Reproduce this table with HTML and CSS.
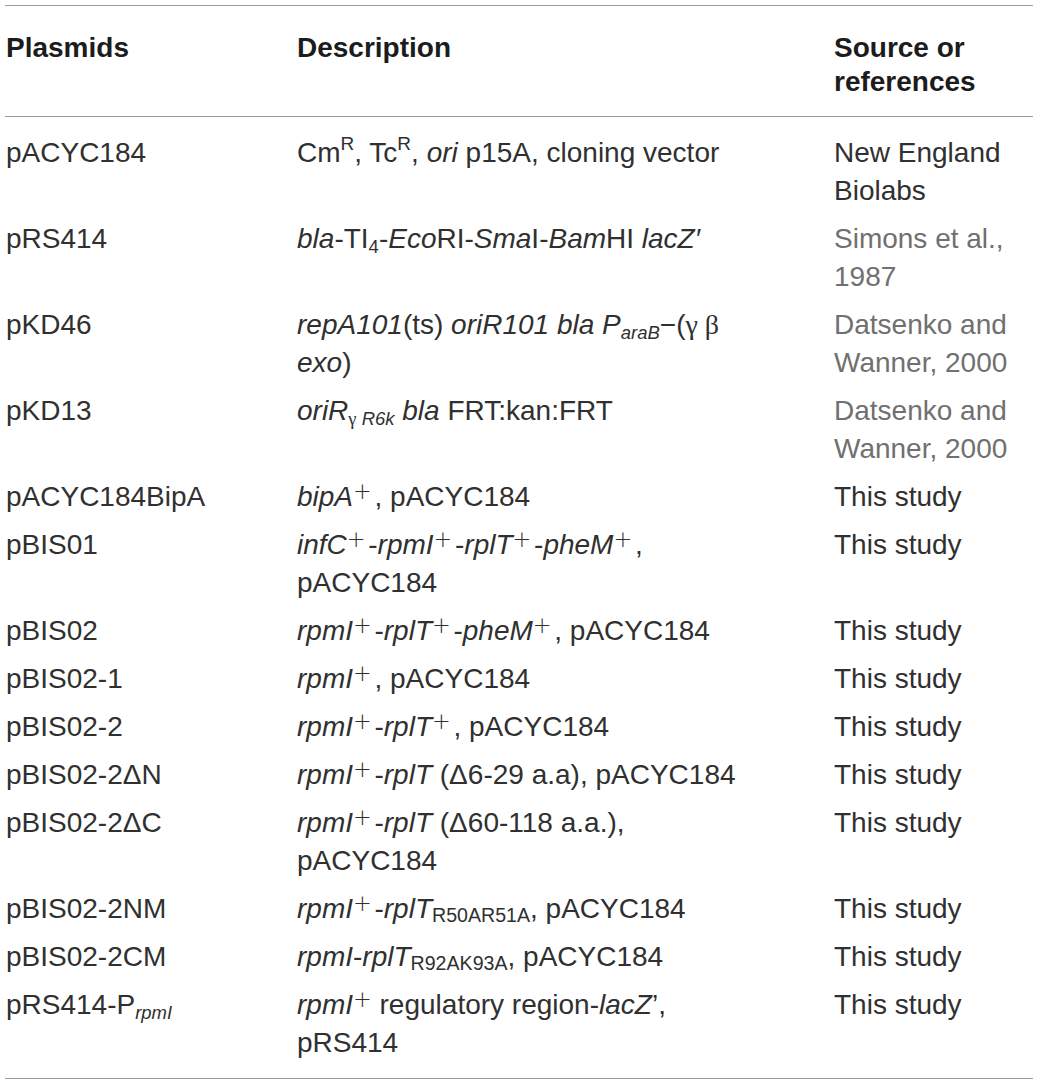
FILE: index.html
```html
<!DOCTYPE html>
<html lang="en">
<head>
<meta charset="utf-8">
<title>Plasmids</title>
<link rel="stylesheet" href="styles.css">
</head>
<body>
<table class="plasmids">
  <colgroup>
    <col class="col-name">
    <col class="col-desc">
    <col class="col-src">
  </colgroup>
  <thead>
    <tr>
      <th>Plasmids</th>
      <th>Description</th>
      <th>Source or references</th>
    </tr>
  </thead>
  <tbody>
    <tr>
      <td>pACYC184</td>
      <td>Cm<sup class="letter">R</sup>, Tc<sup class="letter">R</sup>, <i>ori</i> p15A, cloning vector</td>
      <td>New England Biolabs</td>
    </tr>
    <tr>
      <td>pRS414</td>
      <td><i>bla</i>-TI<sub>4</sub>-<i>Eco</i>RI-<i>Sma</i>I-<i>Bam</i>HI <i>lacZ′</i></td>
      <td class="ref">Simons et al., 1987</td>
    </tr>
    <tr>
      <td>pKD46</td>
      <td><i>repA101</i>(ts) <i>oriR101 bla P<sub>araB</sub></i><span class="dash">−</span>(<span class="greek">γ β</span><br><i>exo</i>)</td>
      <td class="ref">Datsenko and Wanner, 2000</td>
    </tr>
    <tr>
      <td>pKD13</td>
      <td><i>oriR</i><sub><span class="greek">γ</span> <i>R6k</i></sub> <i>bla</i> FRT:kan:FRT</td>
      <td class="ref">Datsenko and Wanner, 2000</td>
    </tr>
    <tr>
      <td>pACYC184BipA</td>
      <td><i>bipA</i><sup class="plus">+</sup>, pACYC184</td>
      <td>This study</td>
    </tr>
    <tr>
      <td>pBIS01</td>
      <td><i>infC</i><sup class="plus">+</sup>-<i>rpmI</i><sup class="plus">+</sup>-<i>rplT</i><sup class="plus">+</sup>-<i>pheM</i><sup class="plus">+</sup>,<br>pACYC184</td>
      <td>This study</td>
    </tr>
    <tr>
      <td>pBIS02</td>
      <td><i>rpmI</i><sup class="plus">+</sup>-<i>rplT</i><sup class="plus">+</sup>-<i>pheM</i><sup class="plus">+</sup>, pACYC184</td>
      <td>This study</td>
    </tr>
    <tr>
      <td>pBIS02-1</td>
      <td><i>rpmI</i><sup class="plus">+</sup>, pACYC184</td>
      <td>This study</td>
    </tr>
    <tr>
      <td>pBIS02-2</td>
      <td><i>rpmI</i><sup class="plus">+</sup>-<i>rplT</i><sup class="plus">+</sup>, pACYC184</td>
      <td>This study</td>
    </tr>
    <tr>
      <td>pBIS02-2ΔN</td>
      <td><i>rpmI</i><sup class="plus">+</sup>-<i>rplT</i> (Δ6-29 a.a), pACYC184</td>
      <td>This study</td>
    </tr>
    <tr>
      <td>pBIS02-2ΔC</td>
      <td><i>rpmI</i><sup class="plus">+</sup>-<i>rplT</i> (Δ60-118 a.a.),<br>pACYC184</td>
      <td>This study</td>
    </tr>
    <tr>
      <td>pBIS02-2NM</td>
      <td><i>rpmI</i><sup class="plus">+</sup>-<i>rplT</i><sub class="mut">R50AR51A</sub>, pACYC184</td>
      <td>This study</td>
    </tr>
    <tr>
      <td>pBIS02-2CM</td>
      <td><i>rpmI</i>-<i>rplT</i><sub class="mut">R92AK93A</sub>, pACYC184</td>
      <td>This study</td>
    </tr>
    <tr>
      <td>pRS414-P<sub><i>rpmI</i></sub></td>
      <td><i>rpmI</i><sup class="plus last">+</sup> regulatory region-<i>lacZ</i>’,<br>pRS414</td>
      <td>This study</td>
    </tr>
  </tbody>
</table>
</body>
</html>
```

FILE: styles.css
```css
html, body {
  margin: 0;
  padding: 0;
  background: #ffffff;
}

body {
  font-family: "Liberation Sans", Arial, Helvetica, sans-serif;
  color: #303030;
}

.plasmids {
  border-collapse: collapse;
  table-layout: fixed;
  width: 1028px;
  margin: 5px 0 0 5px;
  border-top: 1px solid #9c9c9c;
  border-bottom: 1px solid #9c9c9c;
}

.col-name { width: 291px; }
.col-desc { width: 537px; }
.col-src  { width: 200px; }

.plasmids th {
  font-size: 28px;
  font-weight: bold;
  line-height: 34px;
  text-align: left;
  vertical-align: top;
  color: #1c1c1c;
  padding: 25px 0 17px 1px;
  border-bottom: 1px solid #9c9c9c;
}

.plasmids td {
  font-size: 28px;
  line-height: 38px;
  vertical-align: top;
  padding: 5px 0 5px 1px;
}

.plasmids tbody tr:first-child td {
  padding-top: 17px;
}

.plasmids tbody tr:last-child td {
  padding-bottom: 16px;
}

.ref {
  color: #707070;
}

.dash {
  font-weight: normal;
}

sup, sub {
  line-height: 0;
  font-size: 0.72em;
}

sup {
  vertical-align: 0.5em;
}

sup.letter {
  font-size: 0.68em;
  vertical-align: 0.62em;
}

sup.plus {
  font-family: "DejaVu Sans", "Liberation Sans", sans-serif;
  font-weight: 200;
  font-size: 0.8em;
  vertical-align: 0.3em;
  margin-right: 0.12em;
}

sup.plus.last {
  margin-right: 0;
}

sub {
  vertical-align: -0.28em;
  font-size: 0.66em;
}

sub.mut {
  font-size: 0.7em;
  vertical-align: -0.2em;
}

.greek {
  font-family: "Liberation Serif", "Times New Roman", serif;
  font-style: normal;
}
```
